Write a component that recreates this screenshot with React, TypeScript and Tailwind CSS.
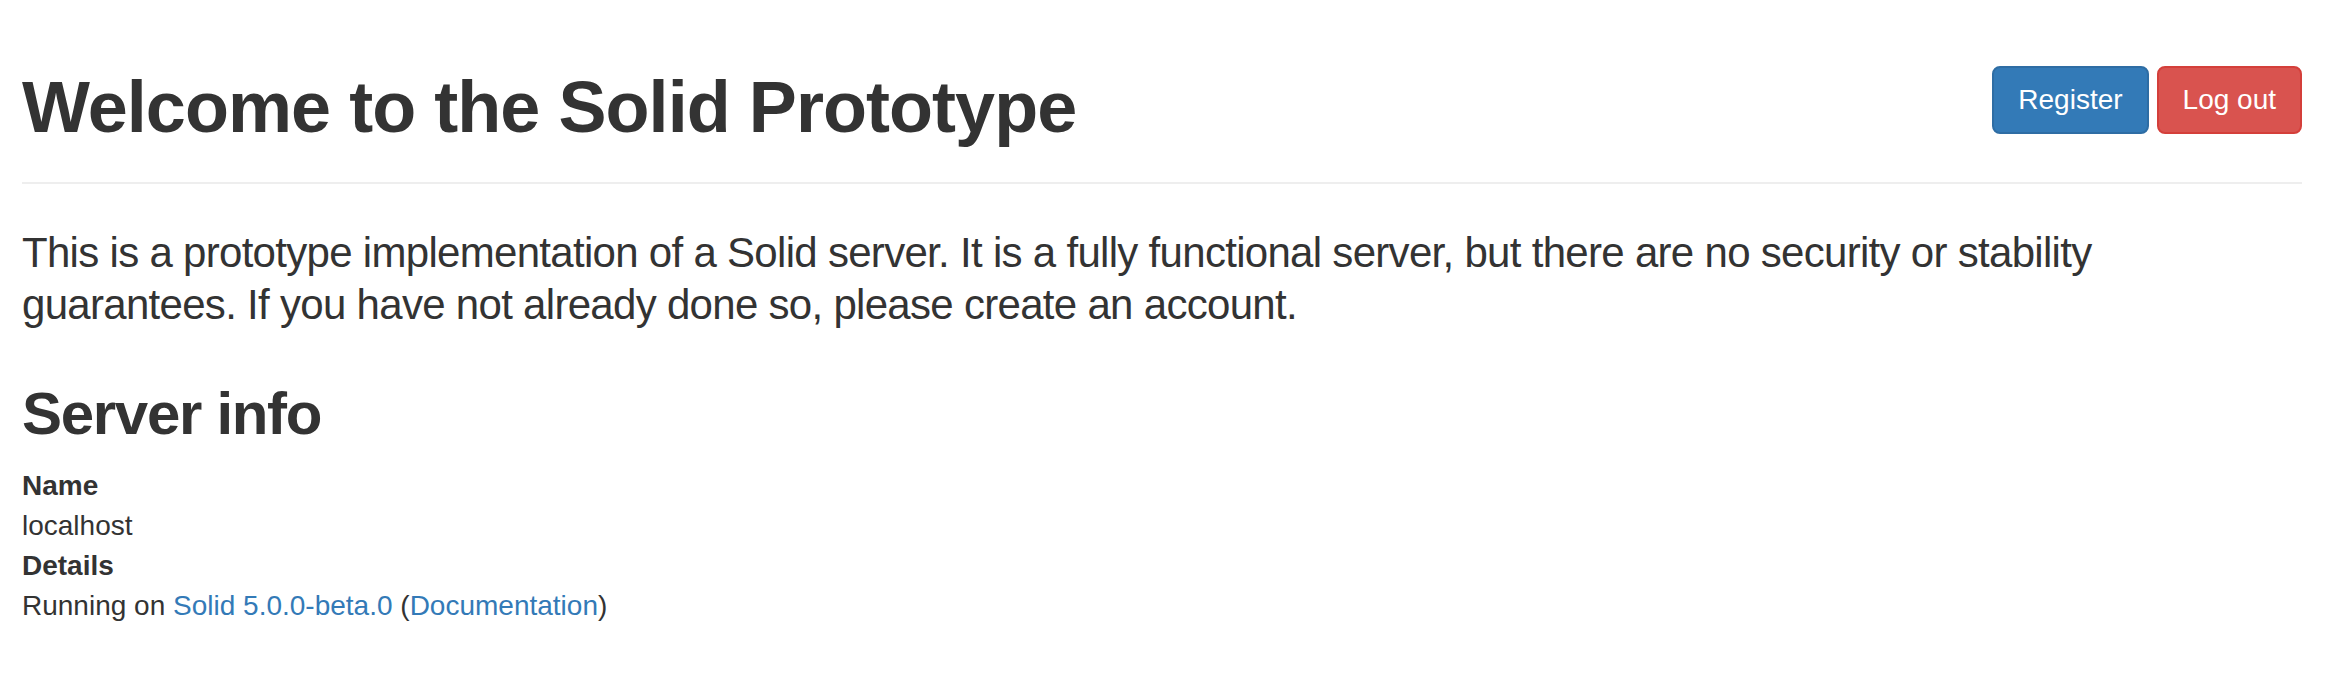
import React from 'react';

const App: React.FC = () => {
  return (
    <div
      className="min-h-screen bg-white pl-[22px] pr-[24px] text-[#333] text-[28px] leading-[40px]"
      style={{ fontFamily: '"Liberation Sans", Arial, Helvetica, sans-serif' }}
    >
      {/* Page header */}
      <div className="flex items-start justify-between border-b-2 border-[#eeeeee] pt-[66px] pb-[35px]">
        <h1 className="mt-[2px] text-[72px] leading-[79px] font-bold tracking-[-0.95px]">
          Welcome to the Solid Prototype
        </h1>
        <div className="flex gap-[8px]">
          <button className="h-[68px] rounded-[8px] border-2 border-[#2e6da4] bg-[#337ab7] px-[24px] text-[28px] leading-[40px] text-white">
            Register
          </button>
          <button className="h-[68px] rounded-[8px] border-2 border-[#d43f3a] bg-[#d9534f] px-[24px] text-[28px] leading-[40px] text-white">
            Log out
          </button>
        </div>
      </div>

      <p className="mt-[43px] text-[42px] leading-[52px] font-light tracking-[-0.7px]">
        This is a prototype implementation of a Solid server. It is a fully functional server, but there are no security or
        stability guarantees. If you have not already done so, please create an account.
      </p>

      {/* Server info */}
      <h2 className="mt-[50px] text-[60px] leading-[66px] font-bold tracking-[-1.3px]">Server info</h2>
      <dl className="mt-[19px]">
        <dt className="font-bold">Name</dt>
        <dd>localhost</dd>
        <dt className="font-bold">Details</dt>
        <dd>
          Running on{' '}
          <a href="#" className="text-[#337ab7]">
            Solid 5.0.0-beta.0
          </a>{' '}
          (
          <a href="#" className="text-[#337ab7]">
            Documentation
          </a>
          )
        </dd>
      </dl>
    </div>
  );
};

export default App;
